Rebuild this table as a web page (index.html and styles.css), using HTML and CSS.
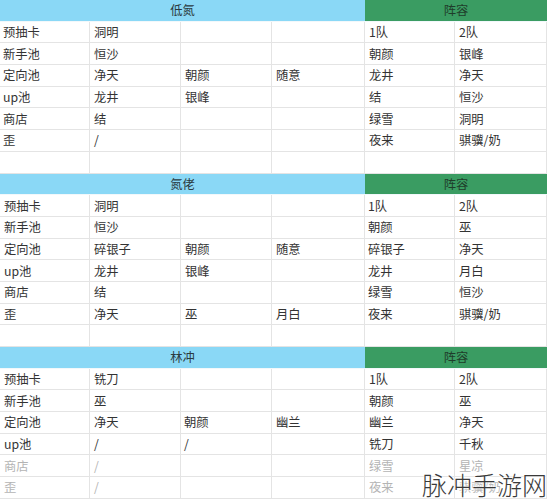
FILE: index.html
```html
<!DOCTYPE html>
<html lang="zh">
<head>
<meta charset="utf-8">
<title>阵容表</title>
<link rel="stylesheet" href="styles.css">
</head>
<body>
<div class="sheet">
  <div class="grid">
    <div class="hd hd-blue">低氮</div><div class="hd hd-green">阵容</div>
    <div class="c">预抽卡</div><div class="c">洞明</div><div class="c"></div><div class="c"></div><div class="c">1队</div><div class="c">2队</div>
    <div class="c">新手池</div><div class="c">恒沙</div><div class="c"></div><div class="c"></div><div class="c">朝颜</div><div class="c">银峰</div>
    <div class="c">定向池</div><div class="c">净天</div><div class="c">朝颜</div><div class="c">随意</div><div class="c">龙井</div><div class="c">净天</div>
    <div class="c">up池</div><div class="c">龙井</div><div class="c">银峰</div><div class="c"></div><div class="c">结</div><div class="c">恒沙</div>
    <div class="c">商店</div><div class="c">结</div><div class="c"></div><div class="c"></div><div class="c">绿雪</div><div class="c">洞明</div>
    <div class="c">歪</div><div class="c">/</div><div class="c"></div><div class="c"></div><div class="c">夜来</div><div class="c">骐骥/奶</div>
    <div class="c"></div><div class="c"></div><div class="c"></div><div class="c"></div><div class="c"></div><div class="c"></div>

    <div class="hd hd-blue">氮佬</div><div class="hd hd-green">阵容</div>
    <div class="c">预抽卡</div><div class="c">洞明</div><div class="c"></div><div class="c"></div><div class="c">1队</div><div class="c">2队</div>
    <div class="c">新手池</div><div class="c">恒沙</div><div class="c"></div><div class="c"></div><div class="c">朝颜</div><div class="c">巫</div>
    <div class="c">定向池</div><div class="c">碎银子</div><div class="c">朝颜</div><div class="c">随意</div><div class="c">碎银子</div><div class="c">净天</div>
    <div class="c">up池</div><div class="c">龙井</div><div class="c">银峰</div><div class="c"></div><div class="c">龙井</div><div class="c">月白</div>
    <div class="c">商店</div><div class="c">结</div><div class="c"></div><div class="c"></div><div class="c">绿雪</div><div class="c">恒沙</div>
    <div class="c">歪</div><div class="c">净天</div><div class="c">巫</div><div class="c">月白</div><div class="c">夜来</div><div class="c">骐骥/奶</div>
    <div class="c"></div><div class="c"></div><div class="c"></div><div class="c"></div><div class="c"></div><div class="c"></div>

    <div class="hd hd-blue">林冲</div><div class="hd hd-green">阵容</div>
    <div class="c">预抽卡</div><div class="c">铣刀</div><div class="c"></div><div class="c"></div><div class="c">1队</div><div class="c">2队</div>
    <div class="c">新手池</div><div class="c">巫</div><div class="c"></div><div class="c"></div><div class="c">朝颜</div><div class="c">巫</div>
    <div class="c">定向池</div><div class="c">净天</div><div class="c">朝颜</div><div class="c">幽兰</div><div class="c">幽兰</div><div class="c">净天</div>
    <div class="c">up池</div><div class="c">/</div><div class="c">/</div><div class="c"></div><div class="c">铣刀</div><div class="c">千秋</div>
    <div class="c faded">商店</div><div class="c faded">/</div><div class="c"></div><div class="c"></div><div class="c faded">绿雪</div><div class="c faded">星凉</div>
    <div class="c faded">歪</div><div class="c faded">/</div><div class="c"></div><div class="c"></div><div class="c faded">夜来</div><div class="c faded">骐骥/奶</div>
  </div>
  <div class="watermark">脉冲手游网</div>
</div>
</body>
</html>
```

FILE: styles.css
```css
html, body {
  margin: 0;
  padding: 0;
  background: #ffffff;
}

.sheet {
  position: relative;
  width: 547px;
  height: 500px;
  overflow: hidden;
  font-family: "Noto Sans CJK SC", "Noto Sans", sans-serif;
  font-size: 12.3px;
  color: #333333;
}

.grid {
  display: grid;
  grid-template-columns: 90px 91px 91px 93px 90px 92px;
  grid-auto-rows: 21.7px;
}

.c {
  display: flex;
  align-items: center;
  padding-left: 4px;
  border-right: 1px solid #e4e4e4;
  border-bottom: 1px solid #e4e4e4;
  white-space: nowrap;
  overflow: hidden;
}

.c:nth-child(6n+3) {
  padding-left: 3px;
}

.faded {
  color: #b4b4b4;
}

.hd {
  display: flex;
  align-items: center;
  justify-content: center;
  border-bottom: 1px solid #f2f8fb;
  color: #2b3a40;
}

.hd-blue {
  grid-column: span 4;
  background: #8ad8f6;
}

.hd-green {
  grid-column: span 2;
  background: #3a9c62;
  color: #1f3d2a;
}

.watermark {
  position: absolute;
  left: 422px;
  top: 466px;
  font-size: 25px;
  font-weight: 300;
  letter-spacing: 0;
  color: #3a3a3a;
  white-space: nowrap;
  text-shadow: 0 0 2px #ffffff, 0 0 2px #ffffff, 0 0 3px #ffffff;
}
```
